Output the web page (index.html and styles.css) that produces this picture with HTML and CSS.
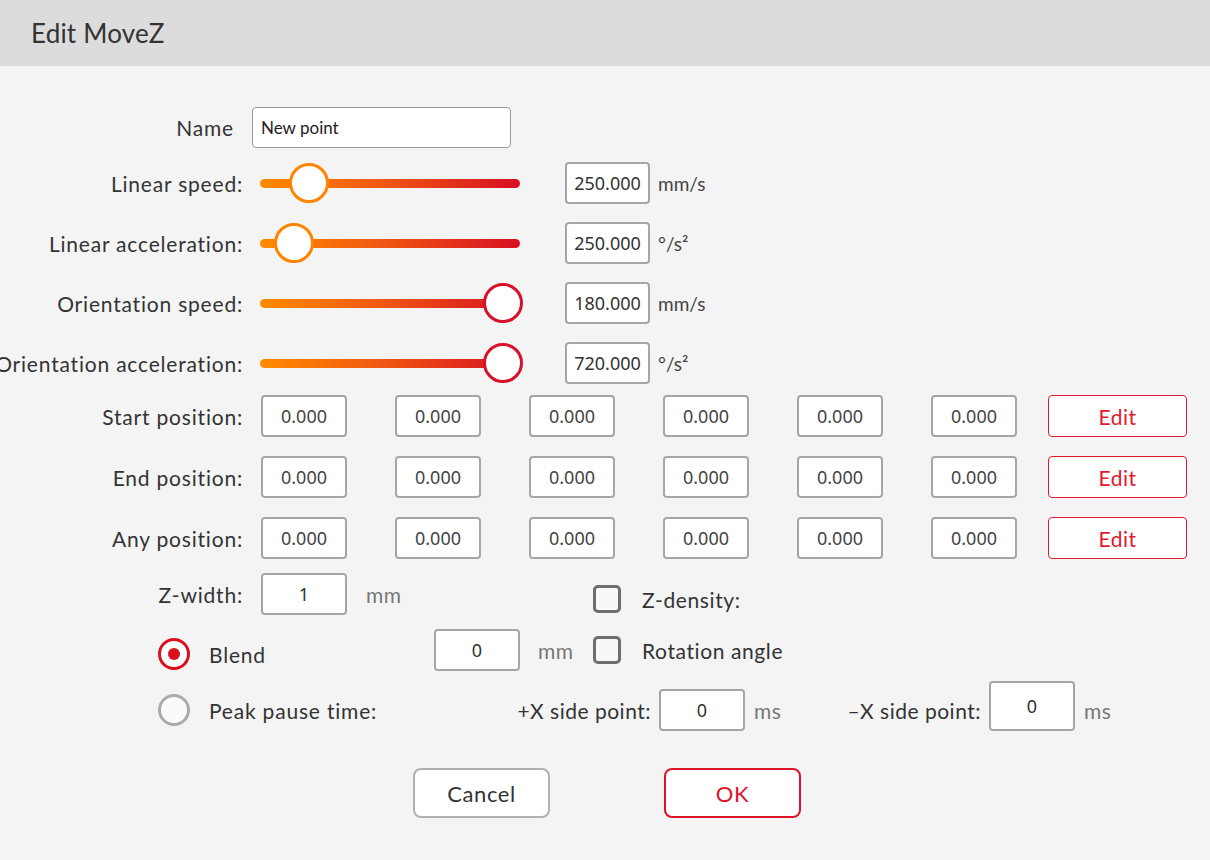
FILE: index.html
```html
<!DOCTYPE html>
<html>
<head>
<meta charset="utf-8">
<title>Edit MoveZ</title>
<link rel="stylesheet" href="styles.css">
</head>
<body>
<div class="dialog">
  <div class="titlebar">Edit MoveZ</div>
  <div class="content">
    <div class="row r-name">
      <span class="lbl lbl-name">Name</span>
      <div class="field field-name">New point</div>
    </div>

    <div class="row r-slider r-first-slider">
      <span class="lbl">Linear speed:</span>
      <div class="slider"><div class="track"></div><div class="thumb thumb-low" style="left:29px"></div></div>
      <div class="field field-val">250.000</div>
      <span class="unit">mm/s</span>
    </div>
    <div class="row r-slider">
      <span class="lbl">Linear acceleration:</span>
      <div class="slider"><div class="track"></div><div class="thumb thumb-low" style="left:14px"></div></div>
      <div class="field field-val">250.000</div>
      <span class="unit">°/s²</span>
    </div>
    <div class="row r-slider">
      <span class="lbl">Orientation speed:</span>
      <div class="slider"><div class="track"></div><div class="thumb thumb-high" style="left:223px"></div></div>
      <div class="field field-val">180.000</div>
      <span class="unit">mm/s</span>
    </div>
    <div class="row r-slider">
      <span class="lbl">Orientation acceleration:</span>
      <div class="slider"><div class="track"></div><div class="thumb thumb-high" style="left:223px"></div></div>
      <div class="field field-val">720.000</div>
      <span class="unit">°/s²</span>
    </div>

    <div class="row r-pos r-first-pos">
      <span class="lbl">Start position:</span>
      <div class="coords">
        <div class="field field-pos">0.000</div><div class="field field-pos">0.000</div><div class="field field-pos">0.000</div><div class="field field-pos">0.000</div><div class="field field-pos">0.000</div><div class="field field-pos">0.000</div>
      </div>
      <button class="btn-edit">Edit</button>
    </div>
    <div class="row r-pos">
      <span class="lbl">End position:</span>
      <div class="coords">
        <div class="field field-pos">0.000</div><div class="field field-pos">0.000</div><div class="field field-pos">0.000</div><div class="field field-pos">0.000</div><div class="field field-pos">0.000</div><div class="field field-pos">0.000</div>
      </div>
      <button class="btn-edit">Edit</button>
    </div>
    <div class="row r-pos">
      <span class="lbl">Any position:</span>
      <div class="coords">
        <div class="field field-pos">0.000</div><div class="field field-pos">0.000</div><div class="field field-pos">0.000</div><div class="field field-pos">0.000</div><div class="field field-pos">0.000</div><div class="field field-pos">0.000</div>
      </div>
      <button class="btn-edit">Edit</button>
    </div>

    <div class="row r-z">
      <div class="left">
        <span class="lbl">Z-width:</span>
        <div class="field field-small">1</div>
        <span class="unit-gray">mm</span>
      </div>
      <div class="check check-low"><span class="box"></span><span class="check-lbl">Z-density:</span></div>
    </div>

    <div class="row r-blend">
      <div class="left">
        <div class="radio-opt"><span class="radio radio-on"><span class="dot"></span></span><span class="radio-lbl">Blend</span></div>
        <div class="field field-small">0</div>
        <span class="unit-gray unit-blend">mm</span>
      </div>
      <div class="check"><span class="box"></span><span class="check-lbl">Rotation angle</span></div>
    </div>

    <div class="row r-peak">
      <div class="radio-opt"><span class="radio radio-off"></span><span class="radio-lbl">Peak pause time:</span></div>
      <div class="side side-plus">
        <span class="side-lbl">+X side point:</span>
        <div class="field field-small field-side">0</div>
        <span class="unit-gray unit-ms">ms</span>
      </div>
      <div class="side">
        <span class="side-lbl">–X side point:</span>
        <div class="field field-small field-side field-tall">0</div>
        <span class="unit-gray unit-ms">ms</span>
      </div>
    </div>

    <div class="actions">
      <button class="btn btn-cancel">Cancel</button>
      <button class="btn btn-ok">OK</button>
    </div>
  </div>
</div>
</body>
</html>
```
FILE: styles.css
```css
* { box-sizing: border-box; }
html, body { margin: 0; padding: 0; }
body {
  background: #f4f4f4;
  font-family: Lato, "Noto Sans", sans-serif;
  color: #333;
  width: 1210px;
  height: 860px;
  overflow: hidden;
}
.titlebar {
  height: 66px;
  background: #dcdcdc;
  padding-left: 31px;
  display: flex;
  align-items: center;
  font-size: 26px;
  letter-spacing: 0.2px;
  color: #333;
}
.content {
  display: flex;
  flex-direction: column;
}
.row {
  display: flex;
  align-items: center;
  height: 42px;
  flex-shrink: 0;
}
.lbl {
  width: 243px;
  display: flex;
  justify-content: flex-end;
  white-space: nowrap;
  font-size: 21px;
  letter-spacing: 0.8px;
  color: #333;
  flex-shrink: 0;
}
.r-name { margin-top: 40px; }
.lbl-name { width: 234px; margin-right: 18px; }
.field {
  background: #fff;
  border: 2px solid #a6a6a6;
  border-radius: 4px;
  height: 42px;
  display: flex;
  align-items: center;
  justify-content: center;
  font-family: "Noto Sans", sans-serif;
  font-size: 18px;
  color: #333;
  flex-shrink: 0;
}
.field-name {
  width: 259px;
  height: 41px;
  justify-content: flex-start;
  padding-left: 8px;
  border: 1px solid #9a9a9a;
  font-family: Lato, sans-serif;
  font-size: 17px;
  color: #222;
}
.r-slider { margin-top: 18px; }
.r-first-slider { margin-top: 14px; }
.slider {
  position: relative;
  width: 260px;
  height: 40px;
  margin-left: 17px;
  display: flex;
  align-items: center;
}
.track {
  width: 100%;
  height: 9px;
  border-radius: 5px;
  background: linear-gradient(90deg, #ff8a00 0%, #f05a12 45%, #d80e22 100%);
}
.thumb {
  position: absolute;
  top: 0;
  width: 40px;
  height: 40px;
  border-radius: 50%;
  background: #fff;
  border: 3px solid #ff8400;
}
.thumb-high { border-color: #d8112a; }
.field-val { width: 85px; margin-left: 45px; }
.unit { margin-left: 8px; font-size: 19px; color: #444; }

.r-pos { margin-top: 19px; }
.r-first-pos { margin-top: 11px; }
.coords {
  display: flex;
  gap: 48px;
  margin-left: 18px;
}
.field-pos { width: 86px; color: #444; }
.btn-edit {
  margin-left: 31px;
  width: 139px;
  height: 42px;
  background: #fff;
  border: 1.5px solid #e0192d;
  border-radius: 4px;
  color: #e0192d;
  font-family: Lato, sans-serif;
  font-size: 21px;
  letter-spacing: 0.5px;
  padding: 0;
}

.r-z { margin-top: 14px; }
.r-blend { margin-top: 14px; }
.r-peak { margin-top: 18px; }
.left {
  width: 593px;
  display: flex;
  align-items: center;
  flex-shrink: 0;
}
.field-small { width: 86px; margin-left: 18px; }
.unit-gray { margin-left: 19px; font-size: 21px; letter-spacing: 0.5px; color: #777; }
.unit-blend { margin-left: 18px; }
.check {
  display: flex;
  align-items: center;
}
.check-low { margin-top: 10px; }
.box {
  width: 28px;
  height: 28px;
  border: 3px solid #6e6e6e;
  border-radius: 5px;
  background: #f8f8f8;
}
.check-lbl { margin-left: 21px; font-size: 21px; letter-spacing: 0.6px; color: #333; }
.radio-opt {
  display: flex;
  align-items: center;
  margin-left: 158px;
  width: 276px;
  flex-shrink: 0;
}
.r-blend .radio-opt { width: 258px; }
.radio {
  width: 32px;
  height: 32px;
  border-radius: 50%;
  border: 3px solid #d9101e;
  display: flex;
  align-items: center;
  justify-content: center;
  background: #fff;
  flex-shrink: 0;
}
.radio-on { margin-top: 8px; }
.dot {
  width: 12px;
  height: 12px;
  border-radius: 50%;
  background: #d9101e;
}
.radio-off { border-color: #ababab; background: #fafafa; }
.radio-lbl { margin-left: 19px; font-size: 21px; letter-spacing: 0.8px; color: #333; white-space: nowrap; }
.r-blend .radio-lbl { margin-top: 8px; }
.side {
  display: flex;
  align-items: center;
  flex-shrink: 0;
}
.side-plus { margin-left: 79px; width: 330px; }
.side-lbl {
  width: 138px;
  display: flex;
  justify-content: flex-end;
  font-size: 21px;
  letter-spacing: 0.5px;
  color: #333;
  white-space: nowrap;
  flex-shrink: 0;
}
.field-side { margin-left: 8px; }
.field-tall { height: 50px; margin-top: -8px; }
.unit-ms { margin-left: 9px; }

.actions {
  display: flex;
  justify-content: center;
  gap: 114px;
  margin-top: 37px;
  padding-left: 4px;
}
.btn {
  width: 137px;
  height: 50px;
  border-radius: 8px;
  background: #fff;
  font-family: Lato, sans-serif;
  font-size: 22px;
  letter-spacing: 0.6px;
  padding: 0;
}
.btn-cancel { border: 2px solid #b0b0b0; color: #333; }
.btn-ok { border: 2px solid #dc1428; color: #dc1428; }
```
